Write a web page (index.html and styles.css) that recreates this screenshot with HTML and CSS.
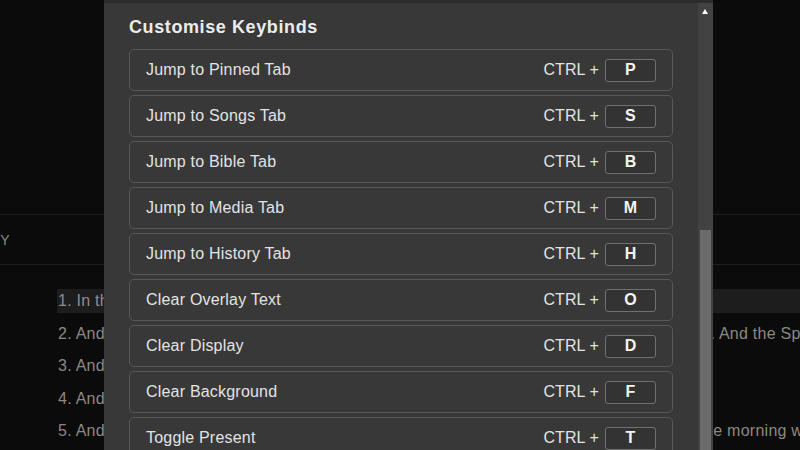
FILE: index.html
```html
<!DOCTYPE html>
<html lang="en">
<head>
<meta charset="utf-8">
<title>Customise Keybinds</title>
<link rel="stylesheet" href="styles.css">
</head>
<body>
<div class="page">
  <div class="preview"></div>
  <div class="tabbar"><span class="tab">HISTORY</span></div>
  <ol class="verses">
    <li class="verse active">1. In the beginning God created the heaven and the earth.</li>
    <li class="verse">2. And the earth was without form, and void; and darkness was upon the face of the deep. And the Spirit of God moved upon the face of the waters.</li>
    <li class="verse">3. And God said, Let there be light: and there was light.</li>
    <li class="verse">4. And God saw the light, that it was good: and God divided the light from the darkness.</li>
    <li class="verse">5. And God called the light Day, and the darkness he called Night. And the evening and the morning were the first day.</li>
  </ol>
</div>

<div class="modal">
  <div class="modal-content">
    <h2 class="modal-title">Customise Keybinds</h2>
    <div class="binds">
      <div class="bind"><span class="bind-label">Jump to Pinned Tab</span><span class="combo">CTRL +<span class="key">P</span></span></div>
      <div class="bind"><span class="bind-label">Jump to Songs Tab</span><span class="combo">CTRL +<span class="key">S</span></span></div>
      <div class="bind"><span class="bind-label">Jump to Bible Tab</span><span class="combo">CTRL +<span class="key">B</span></span></div>
      <div class="bind"><span class="bind-label">Jump to Media Tab</span><span class="combo">CTRL +<span class="key">M</span></span></div>
      <div class="bind"><span class="bind-label">Jump to History Tab</span><span class="combo">CTRL +<span class="key">H</span></span></div>
      <div class="bind"><span class="bind-label">Clear Overlay Text</span><span class="combo">CTRL +<span class="key">O</span></span></div>
      <div class="bind"><span class="bind-label">Clear Display</span><span class="combo">CTRL +<span class="key">D</span></span></div>
      <div class="bind"><span class="bind-label">Clear Background</span><span class="combo">CTRL +<span class="key">F</span></span></div>
      <div class="bind"><span class="bind-label">Toggle Present</span><span class="combo">CTRL +<span class="key">T</span></span></div>
    </div>
  </div>
  <div class="scrollbar">
    <span class="scroll-arrow"></span>
    <span class="scroll-thumb"></span>
  </div>
</div>
</body>
</html>
```

FILE: styles.css
```css
html, body {
  margin: 0;
  padding: 0;
  height: 100%;
}
body {
  background: #0b0b0b;
  font-family: "Liberation Sans", Arial, sans-serif;
  overflow: hidden;
}
.page {
  width: 800px;
  height: 450px;
  overflow: hidden;
}
.preview {
  height: 214px;
}
.tabbar {
  height: 49px;
  border-top: 1px solid #1d1d1d;
  border-bottom: 1px solid #1d1d1d;
  display: flex;
  align-items: center;
  white-space: nowrap;
  overflow: hidden;
}
.tab {
  margin-left: -54px;
  font-size: 14px;
  color: #8a8a8a;
  letter-spacing: 0.3px;
}
.verses {
  list-style: none;
  margin: 24px 0 0 57px;
  padding: 0;
  display: flex;
  flex-direction: column;
  gap: 8.5px;
}
.verse {
  height: 24px;
  line-height: 24px;
  padding-left: 1px;
  font-size: 16px;
  letter-spacing: 0.25px;
  color: #8d8882;
  white-space: nowrap;
  overflow: hidden;
}
.verse.active {
  background: #1d1d1d;
  color: #8e8e8e;
}

.modal {
  position: fixed;
  left: 104px;
  top: 0;
  width: 609px;
  height: 450px;
  background: #383838;
  border-top: 3px solid #2c2c2c;
  box-sizing: border-box;
  overflow: hidden;
}
.modal-content {
  padding: 12px 40px 0 25px;
}
.modal-title {
  margin: 0 0 10px 0;
  font-size: 18px;
  line-height: 24px;
  font-weight: bold;
  letter-spacing: 0.6px;
  color: #ececec;
}
.binds {
  display: flex;
  flex-direction: column;
  gap: 4px;
}
.bind {
  height: 42px;
  box-sizing: border-box;
  border: 1px solid #595959;
  border-radius: 5px;
  padding: 0 16px;
  display: flex;
  align-items: center;
  justify-content: space-between;
  font-size: 16px;
  color: #e3e3e3;
}
.bind-label {
  letter-spacing: 0.2px;
}
.combo {
  display: flex;
  align-items: center;
  letter-spacing: 0.1px;
}
.key {
  width: 51px;
  height: 23px;
  box-sizing: border-box;
  margin-left: 6px;
  border: 1px solid #707070;
  border-radius: 3px;
  background: #333333;
  display: flex;
  align-items: center;
  justify-content: center;
  font-weight: bold;
  color: #f4f4f4;
}

.scrollbar {
  position: absolute;
  right: 0;
  top: 0;
  bottom: 0;
  width: 15px;
  background: #424242;
}
.scroll-arrow {
  position: absolute;
  left: 4px;
  top: 6px;
  width: 0;
  height: 0;
  border-left: 3.5px solid transparent;
  border-right: 3.5px solid transparent;
  border-bottom: 5px solid #ffffff;
}
.scroll-thumb {
  position: absolute;
  left: 2px;
  right: 2px;
  top: 227px;
  bottom: 0;
  background: #6b6b6b;
}
```
